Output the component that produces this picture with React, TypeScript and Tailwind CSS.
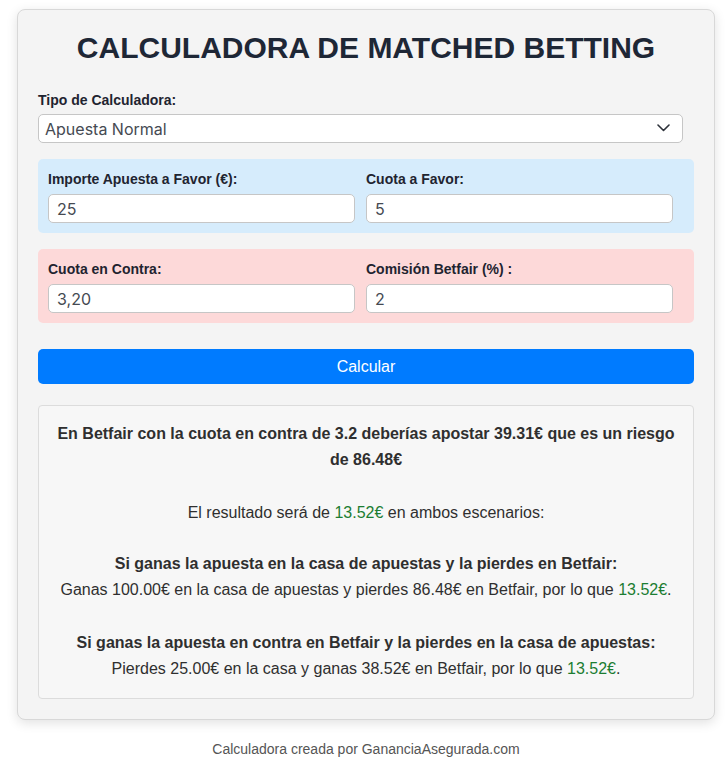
import React from 'react';

const arial = { fontFamily: '"Liberation Sans", Arial, sans-serif' };

const Field: React.FC<{ label: string; value: string }> = ({ label, value }) => (
  <div>
    <label className="block text-[14px] font-bold leading-[20px] text-[#1f2430] mb-[5px]">{label}</label>
    <input
      type="text"
      defaultValue={value}
      className="w-[307px] h-[29px] bg-white border border-[#c6c6c6] rounded-[5px] pl-[8px] text-[16px] text-[#454a52] font-['Inter',sans-serif] focus:outline-none"
    />
  </div>
);

const Green: React.FC<{ children: React.ReactNode }> = ({ children }) => (
  <span className="text-[#1c7d32]">{children}</span>
);

export default function App() {
  return (
    <div className="min-h-[761px] bg-white pt-[9px]" style={arial}>
      <div className="ml-[17px] w-[698px] bg-[#f4f4f4] border border-[#d8d8d8] rounded-[8px] shadow-[0_3px_12px_rgba(0,0,0,0.12)] px-[20px] pt-[20px] pb-[20px]">
        <h1 className="text-[30px] leading-[36px] font-bold text-center text-[#1e2736]">
          CALCULADORA DE MATCHED BETTING
        </h1>

        <label className="block mt-[26px] text-[14px] font-bold leading-[16px] text-[#1f2430]">
          Tipo de Calculadora:
        </label>
        <div className="relative mt-[6px] w-[645px] h-[29px] bg-white border border-[#c6c6c6] rounded-[5px] flex items-center pl-[6px]">
          <span className="text-[16px] text-[#454a52] font-['Inter',sans-serif]">Apuesta Normal</span>
          <svg className="absolute right-[12px] top-[9px]" width="13" height="8" viewBox="0 0 13 8" fill="none">
            <path d="M1 1l5.5 5.5L12 1" stroke="#2d323a" strokeWidth="1.6" strokeLinecap="round" strokeLinejoin="round" />
          </svg>
        </div>

        <div className="mt-[16px] bg-[#d6ecfc] rounded-[5px] p-[10px] grid grid-cols-2">
          <Field label="Importe Apuesta a Favor (€):" value="25" />
          <Field label="Cuota a Favor:" value="5" />
        </div>

        <div className="mt-[16px] bg-[#fdd9d9] rounded-[5px] p-[10px] grid grid-cols-2">
          <Field label="Cuota en Contra:" value="3,20" />
          <Field label="Comisión Betfair (%) :" value="2" />
        </div>

        <button className="mt-[26px] w-full h-[35px] bg-[#007bff] text-white text-[16px] rounded-[5px]">
          Calcular
        </button>

        <div className="mt-[21px] bg-[#f7f7f7] border border-[#dcdcdc] rounded-[4px] pt-[15px] pb-[16px] px-[16px] text-center text-[16px] leading-[26px] text-[#2f2f2f]">
          <p className="font-bold">
            En Betfair con la cuota en contra de 3.2 deberías apostar 39.31€ que es un riesgo de 86.48€
          </p>
          <p className="mt-[27px]">
            El resultado será de <Green>13.52€</Green> en ambos escenarios:
          </p>
          <p className="mt-[25px] font-bold">Si ganas la apuesta en la casa de apuestas y la pierdes en Betfair:</p>
          <p>
            Ganas 100.00€ en la casa de apuestas y pierdes 86.48€ en Betfair, por lo que <Green>13.52€</Green>.
          </p>
          <p className="mt-[27px] font-bold">Si ganas la apuesta en contra en Betfair y la pierdes en la casa de apuestas:</p>
          <p>
            Pierdes 25.00€ en la casa y ganas 38.52€ en Betfair, por lo que <Green>13.52€</Green>.
          </p>
        </div>
      </div>

      <p className="ml-[17px] w-[698px] mt-[20px] text-center text-[14px] leading-[18px] text-[#555]">
        Calculadora creada por GananciaAsegurada.com
      </p>
    </div>
  );
}
